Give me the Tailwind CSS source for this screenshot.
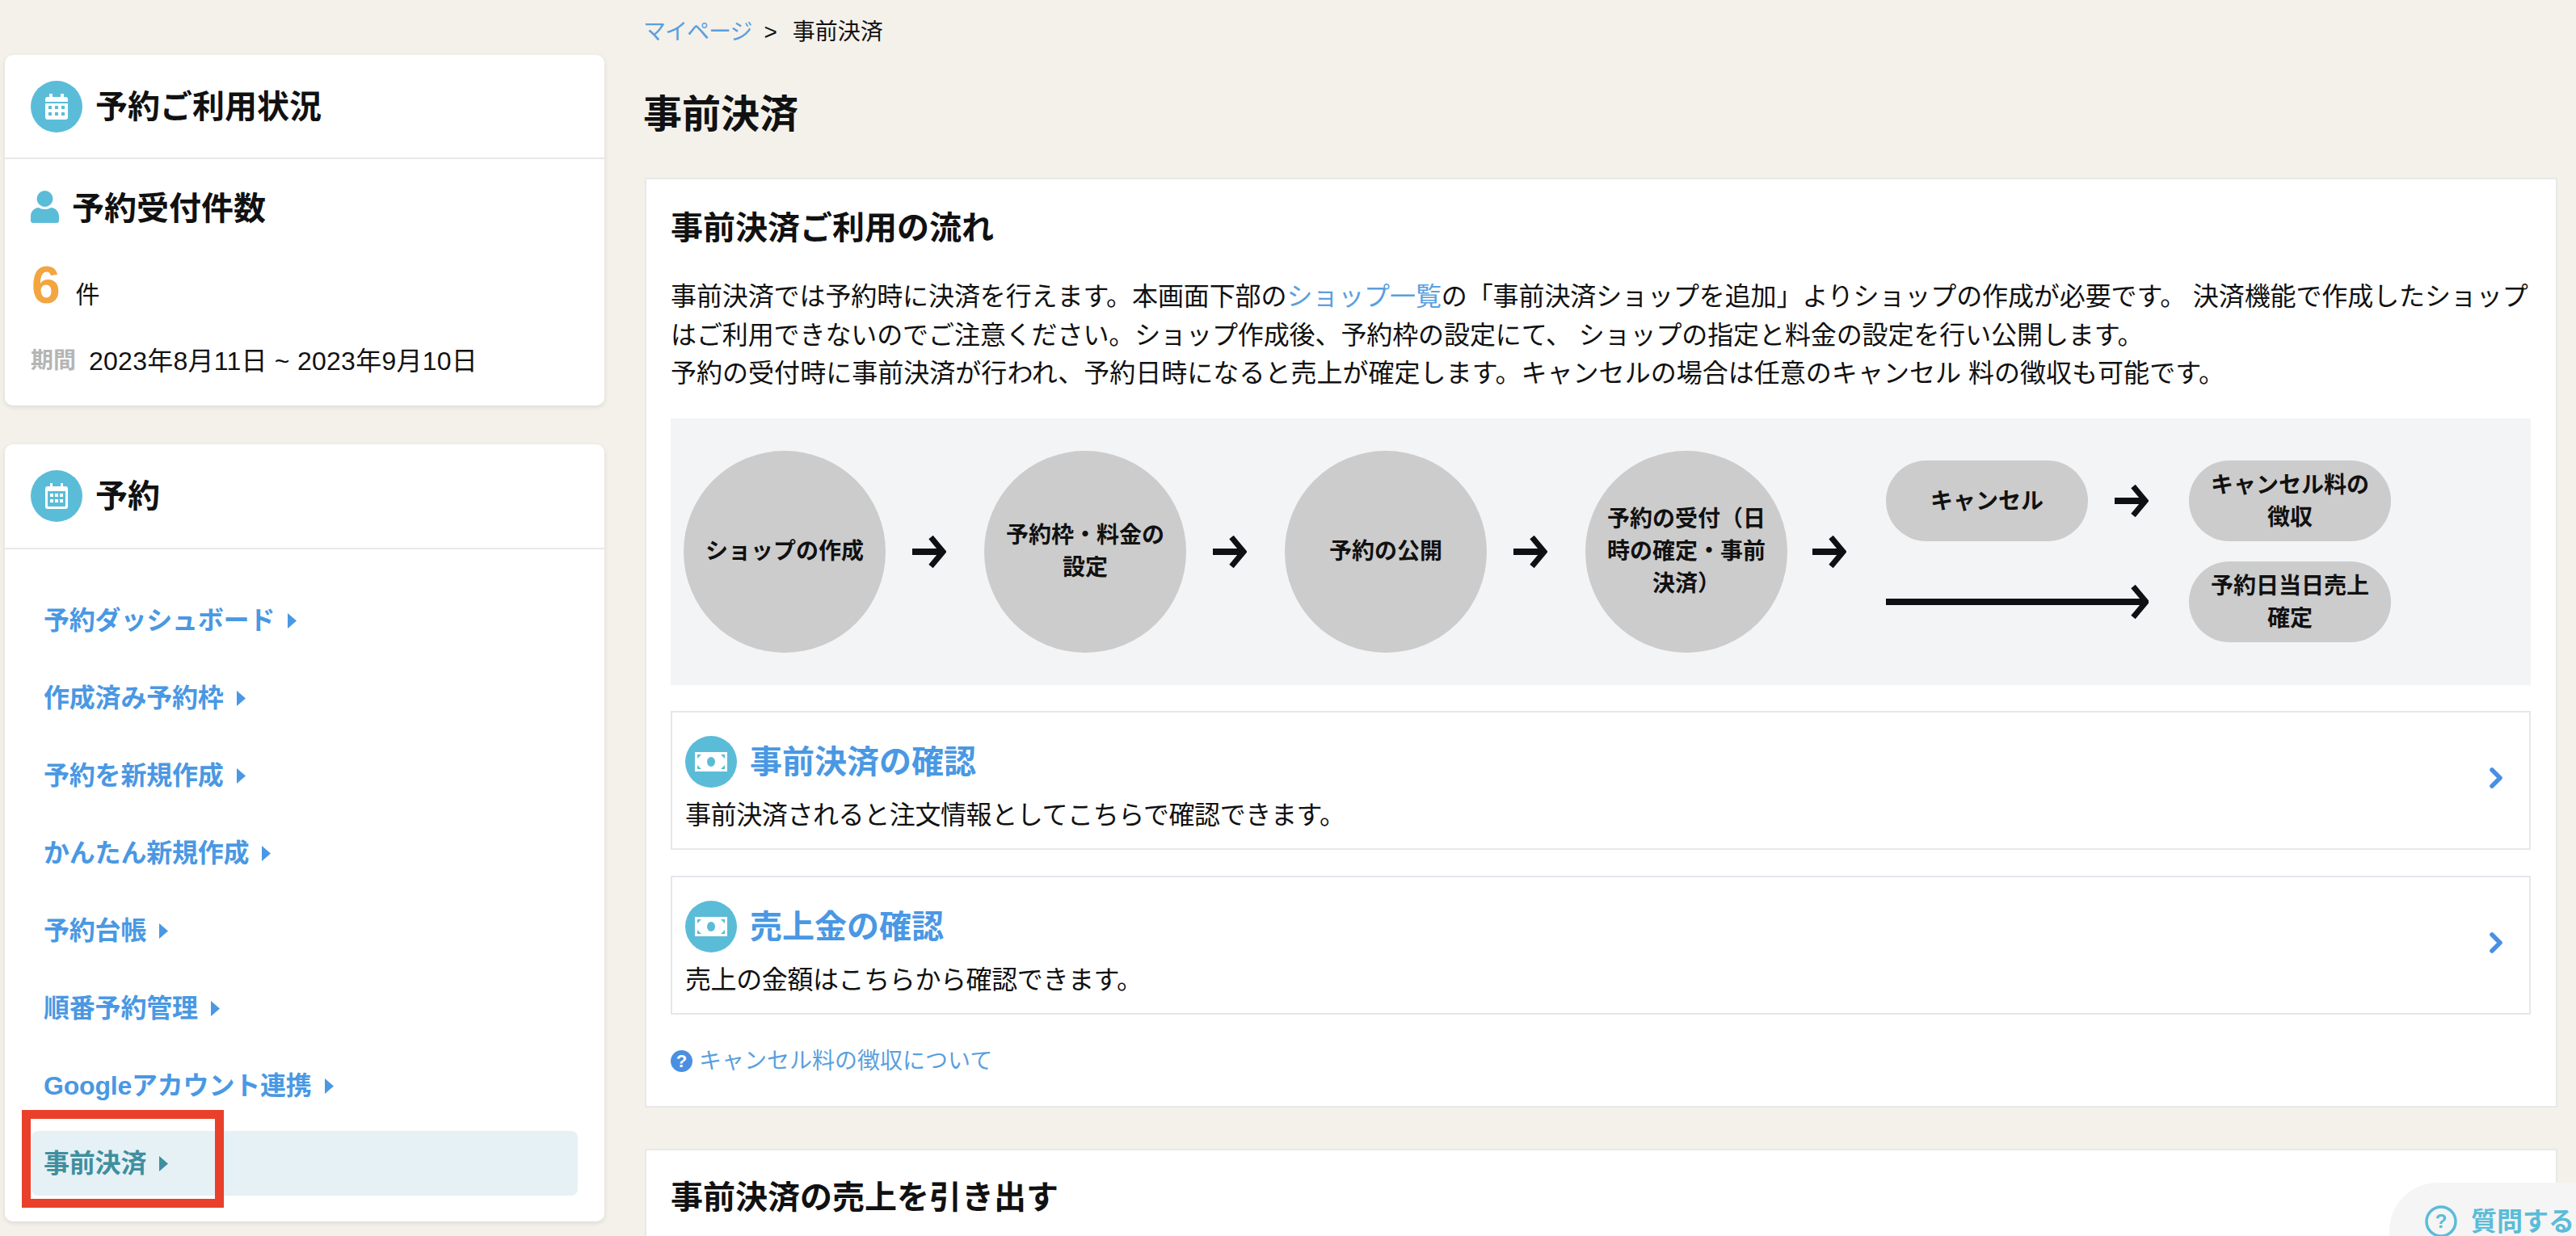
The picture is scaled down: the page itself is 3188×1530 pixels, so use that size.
<!DOCTYPE html>
<html lang="ja">
<head>
  <meta charset="UTF-8">
  <title>事前決済</title>
  <script src="https://cdn.jsdelivr.net/npm/@tailwindcss/browser@4"></script>
</head>
<body class="bg-[#f4f1eb] text-[#111] [font-family:'Liberation_Sans','Noto_Sans_CJK_JP',sans-serif]">
  <svg class="hidden">
    <symbol id="cal" viewBox="0 0 28 32">
      <path fill="#fff" fill-rule="evenodd" d="M5 0h4v4h10V0h4v4h2a3 3 0 0 1 3 3v3H0V7a3 3 0 0 1 3-3h2zM0 12h28v17a3 3 0 0 1-3 3H3a3 3 0 0 1-3-3zm4 3v4h4v-4zm8 0v4h4v-4zm8 0v4h4v-4zM4 23v4h4v-4zm8 0v4h4v-4zm8 0v4h4v-4z"/>
    </symbol>
    <symbol id="cal2" viewBox="0 0 28 32">
      <path fill="#fff" fill-rule="evenodd" d="M6 0h3v4h10V0h3v4h3a3 3 0 0 1 3 3v22a3 3 0 0 1-3 3H3a3 3 0 0 1-3-3V7a3 3 0 0 1 3-3h3zM3 10v18a1 1 0 0 0 1 1h20a1 1 0 0 0 1-1V10z"/>
      <path fill="#fff" d="M6 13h4v4H6zM12 13h4v4h-4zM18 13h4v4h-4zM6 20h4v4H6zM12 20h4v4h-4zM18 20h4v4h-4z"/>
    </symbol>
    <symbol id="money" viewBox="0 0 40 24">
      <rect width="40" height="24" fill="#fff"/>
      <ellipse cx="20" cy="12" rx="5" ry="6" fill="#5bbcd8"/>
      <path fill="#5bbcd8" d="M3 3h5l-5 5zM37 3v5l-5-5zM3 21v-5l5 5zM37 21h-5l5-5z"/>
    </symbol>
    <symbol id="tri" viewBox="0 0 11 19"><path fill="currentColor" d="M0 0l11 9.5L0 19z"/></symbol>
    <symbol id="arrow" viewBox="0 0 42 40">
      <rect y="16" width="37" height="8" fill="#0d1114"/>
      <path fill="none" stroke="#0d1114" stroke-width="7" d="M23 2l15 18-15 18"/>
    </symbol>
    <symbol id="chev" viewBox="0 0 16 26">
      <path fill="none" stroke="currentColor" stroke-width="5.5" stroke-linecap="round" stroke-linejoin="round" d="M3 3l10 10L3 23"/>
    </symbol>
  </svg>

  <div class="relative flex w-[3188px] h-[1530px] overflow-hidden">
    <!-- left column -->
    <aside class="ml-[6px] pt-[68px] w-[742px] shrink-0">
      <section class="bg-white rounded-[10px] shadow-[0_2px_6px_rgba(0,0,0,0.1)]">
        <div class="h-[129px] flex items-center gap-[16px] pl-[32px] border-b-2 border-[#e8e8e8]">
          <span class="w-[64px] h-[64px] rounded-full bg-[#5bbcd8] flex items-center justify-center"><svg class="w-[28px] h-[32px]"><use href="#cal"/></svg></span>
          <h2 class="text-[40px] leading-[40px] font-bold">予約ご利用状況</h2>
        </div>
        <div class="pt-[41px] pl-[32px] pb-[31px]">
          <div class="flex items-center gap-[16px]">
            <svg class="w-[35px] h-[40px] mt-[-5px]" viewBox="0 0 35 40"><circle cx="17.5" cy="10" r="10" fill="#5bbcd8"/><path fill="#5bbcd8" d="M0 32c0-7 5-11 10-11 2 1.500 5 2 7.500 2s5.500-.5 7.500-2c5 0 10 4 10 11v5a3 3 0 0 1-3 3H3a3 3 0 0 1-3-3z"/></svg>
            <h3 class="text-[40px] leading-[40px] font-bold">予約受付件数</h3>
          </div>
          <div class="mt-[43px] flex items-baseline">
            <span class="text-[64px] leading-[64px] font-bold text-[#f2a541] pl-[1px]">6</span>
            <span class="ml-[19px] text-[30px]">件</span>
          </div>
          <div class="mt-[36px] flex items-center h-[48px]">
            <span class="text-[28px] font-bold text-[#b5b5b5]">期間</span>
            <span class="ml-[16px] text-[32px] tracking-[0.25px]">2023年8月11日 ~ 2023年9月10日</span>
          </div>
        </div>
      </section>

      <section class="mt-[48px] bg-white rounded-[10px] shadow-[0_2px_6px_rgba(0,0,0,0.1)]">
        <div class="h-[130px] flex items-center gap-[16px] pl-[32px] border-b-2 border-[#e8e8e8]">
          <span class="w-[64px] h-[64px] rounded-full bg-[#5bbcd8] flex items-center justify-center"><svg class="w-[28px] h-[32px]"><use href="#cal2"/></svg></span>
          <h2 class="text-[40px] leading-[40px] font-bold">予約</h2>
        </div>
        <nav class="pt-[48px] px-[33px] pb-[32px] flex flex-col gap-[16px] text-[32px] font-bold text-[#4a98e3] tracking-[-0.2px]">
          <a class="h-[80px] pl-[15px] flex items-center">予約ダッシュボード<svg class="ml-[16px] w-[11px] h-[19px]"><use href="#tri"/></svg></a>
          <a class="h-[80px] pl-[15px] flex items-center">作成済み予約枠<svg class="ml-[16px] w-[11px] h-[19px]"><use href="#tri"/></svg></a>
          <a class="h-[80px] pl-[15px] flex items-center">予約を新規作成<svg class="ml-[16px] w-[11px] h-[19px]"><use href="#tri"/></svg></a>
          <a class="h-[80px] pl-[15px] flex items-center">かんたん新規作成<svg class="ml-[16px] w-[11px] h-[19px]"><use href="#tri"/></svg></a>
          <a class="h-[80px] pl-[15px] flex items-center">予約台帳<svg class="ml-[16px] w-[11px] h-[19px]"><use href="#tri"/></svg></a>
          <a class="h-[80px] pl-[15px] flex items-center">順番予約管理<svg class="ml-[16px] w-[11px] h-[19px]"><use href="#tri"/></svg></a>
          <a class="h-[80px] pl-[15px] flex items-center">Googleアカウント連携<svg class="ml-[16px] w-[11px] h-[19px]"><use href="#tri"/></svg></a>
          <a class="relative h-[80px] pl-[15px] flex items-center rounded-[8px] bg-[#e6f1f5] text-[#3f8f9f]">事前決済<svg class="ml-[16px] w-[11px] h-[19px]"><use href="#tri"/></svg>
            <span class="absolute left-[-12px] top-[-26px] w-[250px] h-[121px] border-[11px] border-[#e8402a]"></span>
          </a>
        </nav>
      </section>
    </aside>

    <!-- main column -->
    <main class="ml-[50px] w-[2367px] shrink-0 pt-[20px]">
      <div class="flex items-center text-[28px] leading-[40px] ml-[-2px]">
        <a class="text-[#5a9fdd] tracking-[-1px]">マイページ</a>
        <span class="ml-[15px]">&gt;</span>
        <span class="ml-[19px]">事前決済</span>
      </div>
      <h1 class="mt-[50px] text-[48px] leading-[64px] font-bold ml-[-2px]">事前決済</h1>

      <section class="mt-[46px] bg-white border-2 border-[#e8e8e8] pt-[40px] pl-[30px] pr-[31px] pb-[35px]">
        <h2 class="text-[40px] leading-[40px] font-bold">事前決済ご利用の流れ</h2>
        <p class="mt-[42px] text-[32px] leading-[47.5px] tracking-[-0.1px] whitespace-nowrap">事前決済では予約時に決済を行えます。本画面下部の<a class="text-[#5a9fdd]">ショップ一覧</a>の「事前決済ショップを追加」よりショップの作成が必要です。 決済機能で作成したショップ<br>はご利用できないのでご注意ください。ショップ作成後、予約枠の設定にて、 ショップの指定と料金の設定を行い公開します。<br><span class="tracking-[0.03px]">予約の受付時に事前決済が行われ、予約日時になると売上が確定します。キャンセルの場合は任意のキャンセル 料の徴収も可能です。</span></p>

        <div class="mt-[31px] h-[330px] bg-[#f3f4f6] pl-[16px] flex items-center text-[28px] leading-[40px] font-bold text-center">
          <div class="w-[250px] h-[250px] rounded-full bg-[#cccccc] shrink-0 flex items-center justify-center px-[26px]">ショップの作成</div>
          <div class="w-[122px] pl-[33px] flex"><svg class="w-[42px] h-[40px]"><use href="#arrow"/></svg></div>
          <div class="w-[250px] h-[250px] rounded-full bg-[#cccccc] shrink-0 flex items-center justify-center px-[26px]">予約枠・料金の設定</div>
          <div class="w-[122px] pl-[33px] flex"><svg class="w-[42px] h-[40px]"><use href="#arrow"/></svg></div>
          <div class="w-[250px] h-[250px] rounded-full bg-[#cccccc] shrink-0 flex items-center justify-center px-[26px]">予約の公開</div>
          <div class="w-[122px] pl-[33px] flex"><svg class="w-[42px] h-[40px]"><use href="#arrow"/></svg></div>
          <div class="w-[250px] h-[250px] rounded-full bg-[#cccccc] shrink-0 flex items-center justify-center px-[26px]">予約の受付（日時の確定・事前決済）</div>
          <div class="w-[122px] pl-[31px] flex"><svg class="w-[42px] h-[40px]"><use href="#arrow"/></svg></div>
          <div class="flex flex-col gap-[25px] mt-[-1px]">
            <div class="flex items-center">
              <div class="w-[250px] h-[100px] rounded-[50px] bg-[#cccccc] flex items-center justify-center px-[24px] pt-[2px]">キャンセル</div>
              <div class="w-[125px] pl-[33px] flex"><svg class="w-[42px] h-[40px]"><use href="#arrow"/></svg></div>
              <div class="w-[250px] h-[100px] rounded-[50px] bg-[#cccccc] flex items-center justify-center px-[24px] pt-[2px]">キャンセル料の徴収</div>
            </div>
            <div class="flex items-center">
              <svg class="w-[325px] h-[44px] mr-[50px]" viewBox="0 0 325 44"><rect y="18" width="320" height="8" fill="#0d1114"/><path fill="none" stroke="#0d1114" stroke-width="7" d="M306 3l16 19-16 19"/></svg>
              <div class="w-[250px] h-[100px] rounded-[50px] bg-[#cccccc] flex items-center justify-center px-[24px] pt-[2px]">予約日当日売上確定</div>
            </div>
          </div>
        </div>

        <a class="mt-[32px] h-[172px] border-2 border-[#e5e7eb] pl-[16px] pr-[33px] pt-[12px] flex items-center justify-between">
          <div>
            <div class="flex items-center gap-[16px]">
              <span class="w-[64px] h-[64px] rounded-full bg-[#5bbcd8] flex items-center justify-center"><svg class="w-[40px] h-[24px]"><use href="#money"/></svg></span>
              <span class="text-[40px] leading-[40px] font-bold text-[#4a98e3]">事前決済の確認</span>
            </div>
            <p class="mt-[10px] text-[32px] leading-[48px] tracking-[-0.4px]">事前決済されると注文情報としてこちらで確認できます。</p>
          </div>
          <svg class="w-[16px] h-[26px] text-[#4a90e2] mb-[18px]"><use href="#chev"/></svg>
        </a>
        <a class="mt-[32px] h-[172px] border-2 border-[#e5e7eb] pl-[16px] pr-[33px] pt-[12px] flex items-center justify-between">
          <div>
            <div class="flex items-center gap-[16px]">
              <span class="w-[64px] h-[64px] rounded-full bg-[#5bbcd8] flex items-center justify-center"><svg class="w-[40px] h-[24px]"><use href="#money"/></svg></span>
              <span class="text-[40px] leading-[40px] font-bold text-[#4a98e3]">売上金の確認</span>
            </div>
            <p class="mt-[10px] text-[32px] leading-[48px] tracking-[-0.4px]">売上の金額はこちらから確認できます。</p>
          </div>
          <svg class="w-[16px] h-[26px] text-[#4a90e2] mb-[18px]"><use href="#chev"/></svg>
        </a>

        <a class="mt-[38px] flex items-center h-[40px] text-[28px] text-[#5a9fdd]">
          <span class="w-[27px] h-[27px] rounded-full bg-[#4a90e2] text-white text-[22px] font-bold flex items-center justify-center">?</span>
          <span class="ml-[8px]">キャンセル料の徴収について</span>
        </a>
      </section>

      <section class="mt-[51px] bg-white border-2 border-[#e8e8e8] pt-[38px] pl-[30px] pr-[31px] pb-[40px]">
        <h2 class="text-[40px] leading-[40px] font-bold">事前決済の売上を引き出す</h2>
      </section>
    </main>

    <!-- floating help button -->
    <div class="absolute left-[2957px] top-[1464px] w-[260px] h-[120px] rounded-tl-[60px] bg-[#f5f5f5] pl-[44px] pt-[28px] flex items-start">
      <svg class="w-[40px] h-[40px]" viewBox="0 0 40 40"><circle cx="20" cy="20" r="18" fill="none" stroke="#5bbcd8" stroke-width="3.500"/></svg>
      <span class="absolute left-[44px] top-[28px] w-[40px] h-[40px] flex items-center justify-center text-[24px] font-bold text-[#5bbcd8]">?</span>
      <span class="ml-[17px] text-[32px] leading-[40px] font-bold text-[#5bbcd8]">質問する</span>
    </div>
  </div>
</body>
</html>
